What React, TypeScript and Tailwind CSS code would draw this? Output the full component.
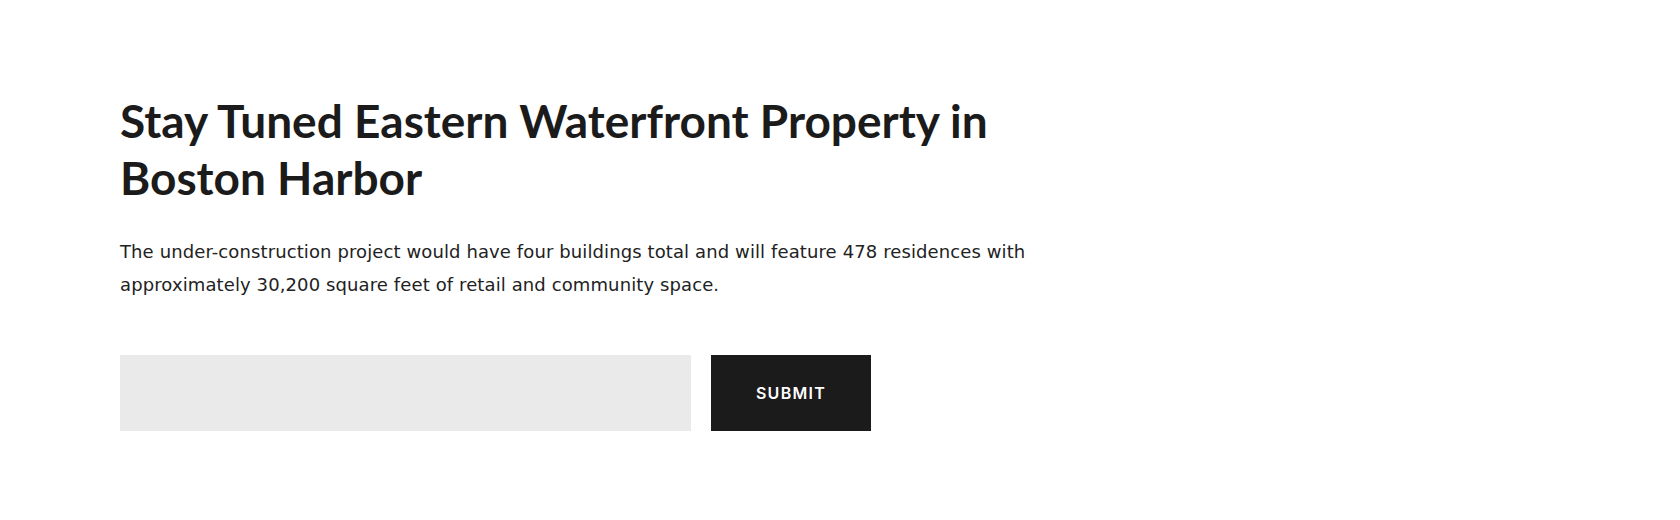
export default function App() {
  return (
    <div className="min-h-screen bg-white">
      <section className="px-[120px] pt-[92px]">
        <h1 className="max-w-[920px] text-[46px] leading-[57px] font-bold text-[#1b1b1b] font-['Lato',sans-serif]">
          Stay Tuned Eastern Waterfront Property in Boston Harbor
        </h1>
        <p className="mt-[29px] max-w-[1000px] text-[18px] leading-[33px] tracking-[0.006em] text-[#222222] font-['DejaVu_Sans',sans-serif]">
          The under-construction project would have four buildings total and will feature 478 residences with approximately 30,200 square feet of retail and community space.
        </p>
        <form className="mt-[54px] flex gap-5" onSubmit={(e) => e.preventDefault()}>
          <input
            type="email"
            aria-label="Email"
            className="h-[76px] w-[571px] bg-[#eaeaea] px-5 text-[17px] outline-none font-['DejaVu_Sans',sans-serif]"
          />
          <button
            type="submit"
            className="h-[76px] w-[160px] bg-[#1b1b1b] text-white text-[16px] font-semibold tracking-[0.08em] font-['Inter',sans-serif]"
          >
            SUBMIT
          </button>
        </form>
      </section>
    </div>
  );
}
